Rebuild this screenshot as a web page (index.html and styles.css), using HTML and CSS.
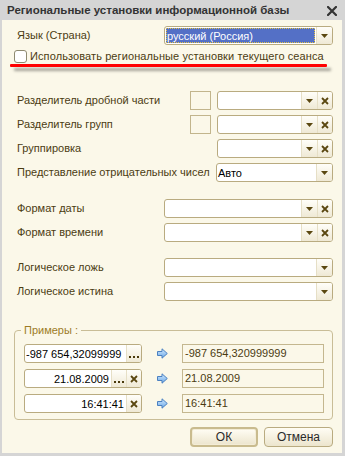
FILE: index.html
```html
<!DOCTYPE html>
<html lang="ru">
<head>
<meta charset="utf-8">
<title>Региональные установки информационной базы</title>
<link rel="stylesheet" href="styles.css">
</head>
<body>
<div class="window">
  <div class="titlebar">
    <span class="title">Региональные установки информационной базы</span>
    <svg class="close" width="10" height="10" viewBox="0 0 10 10"><path d="M1 1L9 9M9 1L1 9" stroke="#333" stroke-width="2.2" stroke-linecap="square"/></svg>
  </div>
  <div class="content">
    <div class="row">
      <span class="lbl">Язык (Страна)</span>
      <div class="combo w-lang">
        <div class="val sel"><span>русский (Россия)</span></div>
        <div class="btn"><svg width="7" height="4" viewBox="0 0 7 4"><path d="M0 0H7L3.5 4Z" fill="#5a4710"/></svg></div>
      </div>
    </div>
    <div class="row check-row">
      <span class="checkbox"></span>
      <span class="lbl">Использовать региональные установки текущего сеанса</span>
    </div>

    <div class="group g1">
      <div class="row">
        <span class="lbl">Разделитель дробной части</span>
        <div class="ctrls">
          <span class="square"></span>
          <div class="combo w-short">
            <div class="val"></div>
            <div class="btn"><svg width="7" height="4" viewBox="0 0 7 4"><path d="M0 0H7L3.5 4Z" fill="#5a4710"/></svg></div>
            <div class="btn clr"><svg width="8" height="8" viewBox="0 0 8 8"><path d="M1 1L7 7M7 1L1 7" stroke="#5a4710" stroke-width="1.8"/></svg></div>
          </div>
        </div>
      </div>
      <div class="row">
        <span class="lbl">Разделитель групп</span>
        <div class="ctrls">
          <span class="square"></span>
          <div class="combo w-short">
            <div class="val"></div>
            <div class="btn"><svg width="7" height="4" viewBox="0 0 7 4"><path d="M0 0H7L3.5 4Z" fill="#5a4710"/></svg></div>
            <div class="btn clr"><svg width="8" height="8" viewBox="0 0 8 8"><path d="M1 1L7 7M7 1L1 7" stroke="#5a4710" stroke-width="1.8"/></svg></div>
          </div>
        </div>
      </div>
      <div class="row">
        <span class="lbl">Группировка</span>
        <div class="combo w-short">
          <div class="val"></div>
          <div class="btn"><svg width="7" height="4" viewBox="0 0 7 4"><path d="M0 0H7L3.5 4Z" fill="#5a4710"/></svg></div>
          <div class="btn clr"><svg width="8" height="8" viewBox="0 0 8 8"><path d="M1 1L7 7M7 1L1 7" stroke="#5a4710" stroke-width="1.8"/></svg></div>
        </div>
      </div>
      <div class="row">
        <span class="lbl">Представление отрицательных чисел</span>
        <div class="combo w-auto">
          <div class="val txt">Авто</div>
          <div class="btn"><svg width="7" height="4" viewBox="0 0 7 4"><path d="M0 0H7L3.5 4Z" fill="#5a4710"/></svg></div>
        </div>
      </div>
    </div>

    <div class="group g2">
      <div class="row">
        <span class="lbl">Формат даты</span>
        <div class="combo w-lang">
          <div class="val"></div>
          <div class="btn"><svg width="7" height="4" viewBox="0 0 7 4"><path d="M0 0H7L3.5 4Z" fill="#5a4710"/></svg></div>
          <div class="btn clr"><svg width="8" height="8" viewBox="0 0 8 8"><path d="M1 1L7 7M7 1L1 7" stroke="#5a4710" stroke-width="1.8"/></svg></div>
        </div>
      </div>
      <div class="row">
        <span class="lbl">Формат времени</span>
        <div class="combo w-lang">
          <div class="val"></div>
          <div class="btn"><svg width="7" height="4" viewBox="0 0 7 4"><path d="M0 0H7L3.5 4Z" fill="#5a4710"/></svg></div>
          <div class="btn clr"><svg width="8" height="8" viewBox="0 0 8 8"><path d="M1 1L7 7M7 1L1 7" stroke="#5a4710" stroke-width="1.8"/></svg></div>
        </div>
      </div>
    </div>

    <div class="group g3">
      <div class="row">
        <span class="lbl">Логическое ложь</span>
        <div class="combo w-lang">
          <div class="val"></div>
          <div class="btn"><svg width="7" height="4" viewBox="0 0 7 4"><path d="M0 0H7L3.5 4Z" fill="#5a4710"/></svg></div>
        </div>
      </div>
      <div class="row">
        <span class="lbl">Логическое истина</span>
        <div class="combo w-lang">
          <div class="val"></div>
          <div class="btn"><svg width="7" height="4" viewBox="0 0 7 4"><path d="M0 0H7L3.5 4Z" fill="#5a4710"/></svg></div>
        </div>
      </div>
    </div>

    <div class="frame">
      <span class="legend">Примеры :</span>
      <div class="ex-row">
        <div class="combo w-ex">
          <div class="val txt">-987 654,32099999</div>
          <div class="btn dots"><svg width="10" height="2" viewBox="0 0 10 2"><path d="M0 0h2v2H0zM4 0h2v2H4zM8 0h2v2H8z" fill="#4a3a0c"/></svg></div>
        </div>
        <svg class="arrow" width="11" height="11" viewBox="0 0 11 11"><defs><linearGradient id="ag" x1="0" y1="0" x2="0" y2="1"><stop offset="0" stop-color="#d2ebff"/><stop offset="1" stop-color="#6aa6e6"/></linearGradient></defs><path d="M0.5 3.5H5V0.8L10.3 5.5L5 10.2V7.5H0.5Z" fill="url(#ag)" stroke="#4b80c0" stroke-width="1"/></svg>
        <div class="out">-987 654,320999999</div>
      </div>
      <div class="ex-row">
        <div class="combo w-ex">
          <div class="val txt right">21.08.2009</div>
          <div class="btn dots"><svg width="10" height="2" viewBox="0 0 10 2"><path d="M0 0h2v2H0zM4 0h2v2H4zM8 0h2v2H8z" fill="#4a3a0c"/></svg></div>
          <div class="btn clr"><svg width="8" height="8" viewBox="0 0 8 8"><path d="M1 1L7 7M7 1L1 7" stroke="#5a4710" stroke-width="1.8"/></svg></div>
        </div>
        <svg class="arrow" width="11" height="11" viewBox="0 0 11 11"><path d="M0.5 3.5H5V0.8L10.3 5.5L5 10.2V7.5H0.5Z" fill="url(#ag)" stroke="#4b80c0" stroke-width="1"/></svg>
        <div class="out">21.08.2009</div>
      </div>
      <div class="ex-row">
        <div class="combo w-ex">
          <div class="val txt right">16:41:41</div>
          <div class="btn clr"><svg width="8" height="8" viewBox="0 0 8 8"><path d="M1 1L7 7M7 1L1 7" stroke="#5a4710" stroke-width="1.8"/></svg></div>
        </div>
        <svg class="arrow" width="11" height="11" viewBox="0 0 11 11"><path d="M0.5 3.5H5V0.8L10.3 5.5L5 10.2V7.5H0.5Z" fill="url(#ag)" stroke="#4b80c0" stroke-width="1"/></svg>
        <div class="out">16:41:41</div>
      </div>
    </div>

    <div class="buttons">
      <button class="pbtn default">ОК</button>
      <button class="pbtn">Отмена</button>
    </div>
  </div>
  <div class="annot"></div>
</div>
</body>
</html>
```

FILE: styles.css
```css
html, body {
  margin: 0;
  padding: 0;
  background: #ffffff;
}

.window {
  position: relative;
  width: 345px;
  height: 456px;
  box-sizing: border-box;
  background: #d5d5d5;
  padding: 0 3px 3px 2px;
  display: flex;
  flex-direction: column;
  font-family: "Liberation Sans", Arial, sans-serif;
  font-size: 11px;
}

.titlebar {
  height: 20px;
  display: flex;
  align-items: center;
  justify-content: space-between;
  padding: 0 5px 0 5px;
  box-sizing: border-box;
}

.title {
  font-size: 11.5px;
  font-weight: bold;
  color: #333333;
}

.close {
  display: block;
  margin-top: 1px;
}

.content {
  flex: 1;
  background: #fbf8e9;
  padding: 6px 9px 0 15px;
  display: flex;
  flex-direction: column;
}

.row {
  height: 19px;
  display: flex;
  align-items: center;
  justify-content: space-between;
}

.lbl {
  color: #4b3c12;
  white-space: nowrap;
  line-height: 19px;
}

.check-row {
  height: 13px;
  margin-top: 5px;
  justify-content: flex-start;
  margin-left: -3px;
}

.check-row .lbl {
  line-height: 13px;
  margin-left: 3px;
  letter-spacing: 0.1px;
}

.checkbox {
  width: 13px;
  height: 13px;
  box-sizing: border-box;
  border: 1px solid #8e8a70;
  border-radius: 3px;
  background: #ffffff;
}

.group {
  display: flex;
  flex-direction: column;
  gap: 5px;
}

.g1 { margin-top: 28px; }
.g2 { margin-top: 17px; }
.g3 { margin-top: 16px; }

.ctrls {
  display: flex;
  align-items: center;
  gap: 6px;
}

.square {
  width: 21px;
  height: 19px;
  box-sizing: border-box;
  border: 1px solid #c2b58c;
}

.combo {
  height: 19px;
  box-sizing: border-box;
  border: 1px solid #b9ab80;
  border-radius: 3px;
  background: #ffffff;
  display: flex;
  overflow: hidden;
}

.w-lang { width: 169px; }
.w-short { width: 116px; }
.w-auto { width: 117px; }
.w-ex { width: 118px; }

.val {
  flex: 1;
  min-width: 0;
  display: flex;
  align-items: center;
  color: #000000;
  white-space: nowrap;
  overflow: hidden;
}

.val.txt {
  padding-left: 1px;
}

.val.right {
  justify-content: flex-end;
  padding-right: 2px;
}

.val.sel {
  margin: 1px;
  background: #5470c6;
  border: 1px dotted #e4c24a;
  color: #ffffff;
  padding-left: 0;
}

.btn {
  width: 15px;
  flex: none;
  display: flex;
  align-items: center;
  justify-content: center;
  background: linear-gradient(#fffef9, #efe9d5);
  border-left: 1px solid #e6dfc6;
}

.btn.clr {
  width: 14px;
}

.btn.dots {
  align-items: flex-end;
  padding-bottom: 4px;
  box-sizing: border-box;
}

.frame {
  position: relative;
  margin-top: 29px;
  margin-left: -3px;
  width: 319px;
  height: 90px;
  box-sizing: border-box;
  border: 1px solid #c9bd97;
  border-radius: 4px;
  padding: 13px 0 0 9px;
  display: flex;
  flex-direction: column;
  gap: 6px;
}

.legend {
  position: absolute;
  top: -8px;
  left: 6px;
  padding: 0 3px;
  background: #fbf8e9;
  color: #9d7c26;
  line-height: 14px;
}

.ex-row {
  display: flex;
  align-items: center;
  height: 19px;
}

.arrow {
  display: block;
  margin-left: 15px;
}

.out {
  margin-left: 14px;
  width: 142px;
  height: 19px;
  box-sizing: border-box;
  border: 1px solid #c4b78f;
  color: #4b3c12;
  line-height: 17px;
  padding-left: 2px;
  white-space: nowrap;
}

.buttons {
  margin-top: 7px;
  display: flex;
  justify-content: flex-end;
  gap: 6px;
}

.pbtn {
  width: 69px;
  height: 20px;
  box-sizing: border-box;
  border: 1px solid #b9ab80;
  border-radius: 4px;
  background: linear-gradient(#fffdf4, #ece5cd);
  font-family: "Liberation Sans", Arial, sans-serif;
  font-size: 12px;
  color: #2a2a2a;
  padding: 0;
}

.pbtn.default {
  width: 68px;
  border: 2px solid #c9bb8e;
  box-shadow: inset 0 0 0 1px #f3ecd6;
}

.annot {
  position: absolute;
  left: 10px;
  top: 64px;
  width: 317px;
  height: 3px;
  background: #ff0000;
  border-radius: 1px;
  box-shadow: 4px 4px 3px rgba(0, 0, 0, 0.35);
}
```
